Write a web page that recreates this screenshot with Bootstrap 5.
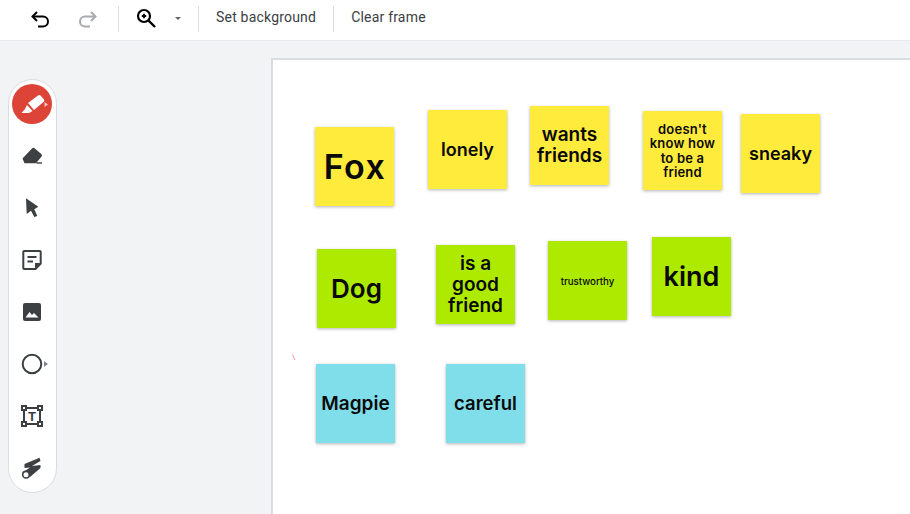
<!DOCTYPE html>
<html lang="en">
<head>
<meta charset="UTF-8">
<title>Jamboard frame</title>
<link rel="stylesheet" href="https://cdn.jsdelivr.net/npm/bootstrap@5.3.0/dist/css/bootstrap.min.css">
<style>
    body { width: 910px; height: 514px; overflow: hidden; background: #f1f3f4; font-family: Roboto, sans-serif; }
    .top-bar { height: 41px; padding-left: 16px; padding-bottom: 2px; background: #fff; border-bottom: 1px solid #e8eaed; }
    .tool-btn { width: 48px; height: 38px; }
    .tool-btn-sm { width: 14px; height: 38px; }
    .bar-sep { width: 1px; height: 26px; background: #dadce0; }
    .sep-a { margin-left: 6px; }
    .sep-b { margin-left: 13px; }
    .bar-text { font-size: 14px; letter-spacing: .2px; color: #3c4043; padding: 0 17px; line-height: 34px; height: 34px; }
    .work-area { height: 473px; }
    .palette-col { width: 271px; padding: 38px 0 0 8px; }
    .palette { width: 49px; height: 414px; background: #fff; border: 1px solid #dadce0; border-radius: 25px; padding-top: 4px; gap: 12px; }
    .pal-item { width: 100%; height: 40px; flex: none; padding-right: 1px; }
    .pal-active { width: 40px; height: 40px; border-radius: 50%; background: #db4437; }
    .shape-more { left: 35px; top: 17px; }
    .canvas-area { margin-top: 17px; border-top: 2px solid #dadce0; border-left: 2px solid #dadce0; background: #fff; position: relative; }
    .sticky { position: absolute; width: 79px; height: 79px; color: #0a0a0a; font-family: Inter, sans-serif; font-weight: 600; text-align: center; box-shadow: 0 1px 3px rgba(60,64,67,.4); }
    .s-yellow { background: #ffeb3b; }
    .s-green { background: #aeea00; }
    .s-blue { background: #80deea; }
    .pen-mark { position: absolute; left: 19px; top: 294px; }
</style>
</head>
<body>
<!-- Toolbar -->
<div class="top-bar d-flex align-items-center">
    <div class="tool-btn d-flex align-items-center justify-content-center">
        <svg width="24" height="24" viewBox="0 0 24 24" fill="none" stroke="#000" stroke-width="2"><path d="M9 14 4.500 9.500 9 5"/><path d="M5 9.500h10a5 5 0 0 1 0 10h-5"/></svg>
    </div>
    <div class="tool-btn d-flex align-items-center justify-content-center">
        <svg width="24" height="24" viewBox="0 0 24 24" fill="none" stroke="#a8aaad" stroke-width="2"><path d="M15 14l4.500-4.500L15 5"/><path d="M19 9.500H9a5 5 0 0 0 0 10h5"/></svg>
    </div>
    <div class="bar-sep sep-a"></div>
    <div class="tool-btn d-flex align-items-center justify-content-center ms-1">
        <svg width="24" height="24" viewBox="0 0 24 24" fill="none" stroke="#000" stroke-width="2.200"><circle cx="9" cy="9" r="6"/><path d="M13.500 13.500l6.500 6.500" stroke-width="2.400"/><path d="M6.800 9h4.400M9 6.800v4.400" stroke-width="1.800"/></svg>
    </div>
    <div class="tool-btn-sm d-flex align-items-center justify-content-center">
        <svg width="6" height="4" viewBox="0 0 6 4"><path d="M0 0h6L3 3z" fill="#5f6368"/></svg>
    </div>
    <div class="bar-sep sep-b"></div>
    <div class="bar-text mb-1">Set background</div>
    <div class="bar-sep"></div>
    <div class="bar-text mb-1">Clear frame</div>
</div>

<div class="work-area d-flex">
    <!-- Tool palette -->
    <div class="palette-col flex-shrink-0">
        <div class="palette d-flex flex-column align-items-center">
            <div class="pal-item d-flex align-items-center justify-content-center">
                <div class="pal-active d-flex align-items-center justify-content-center">
                    <svg width="40" height="40" viewBox="0 0 40 40"><path d="M16 19 26 11.500q1.500-1 3 .5l3 3.500q1 1.500-.5 2.500L22 26z" fill="#fff"/><path d="M15 21l5.500 6-3.500 2H9.500L13 25z" fill="#fff"/><path d="M32.500 18v5l3.500-2.500z" fill="#f6c6c0"/></svg>
                </div>
            </div>
            <div class="pal-item d-flex align-items-center justify-content-center">
                <svg width="24" height="24" viewBox="0 0 24 24" fill="#3c4043"><path d="M2.500 14.500 12 4.500q1.300-1.300 2.800 0l6.500 5.500q1.300 1.300.3 2.500L16 19.300H4.500z"/><rect x="16.500" y="18.300" width="5.500" height="1.400"/></svg>
            </div>
            <div class="pal-item d-flex align-items-center justify-content-center">
                <svg width="24" height="24" viewBox="0 0 24 24" fill="#3c4043"><path d="M6 2.300 18.300 10.700l-4 2.600 3 6.700-3 1-3.300-6.300-4.300 3.300z"/></svg>
            </div>
            <div class="pal-item d-flex align-items-center justify-content-center">
                <svg width="24" height="24" viewBox="0 0 24 24" fill="none" stroke="#3c4043" stroke-width="2"><path d="M4.300 3h15.400a1 1 0 0 1 1 1v11.500L15.500 21H4.300a1 1 0 0 1-1-1V4a1 1 0 0 1 1-1z"/><path d="M7.500 9h9M7.500 13.500h5.500"/><path d="M15 20.500V15h5.500z" fill="#3c4043" stroke="none"/></svg>
            </div>
            <div class="pal-item d-flex align-items-center justify-content-center">
                <svg width="24" height="24" viewBox="0 0 24 24"><rect x="3" y="3" width="18" height="18" rx="2" fill="#3c4043"/><path d="M5.500 17.500l4-5.500 2.500 3 2-2 4.500 4.500z" fill="#fff"/></svg>
            </div>
            <div class="pal-item d-flex align-items-center justify-content-center position-relative">
                <svg width="24" height="24" viewBox="0 0 24 24" fill="none"><circle cx="12" cy="12" r="9.300" stroke="#3c4043" stroke-width="2"/></svg>
                <svg class="position-absolute shape-more" width="5" height="6" viewBox="0 0 5 6"><path d="M0 0l4 3-4 3z" fill="#80868b"/></svg>
            </div>
            <div class="pal-item d-flex align-items-center justify-content-center">
                <svg width="24" height="24" viewBox="0 0 24 24"><rect x="4" y="4" width="16" height="16" fill="none" stroke="#3c4043" stroke-width="2"/><g fill="#fff" stroke="#3c4043" stroke-width="2"><rect x="2" y="2" width="4" height="4"/><rect x="18" y="2" width="4" height="4"/><rect x="2" y="18" width="4" height="4"/><rect x="18" y="18" width="4" height="4"/></g><text x="12" y="16.800" text-anchor="middle" font-family="Roboto, sans-serif" font-weight="700" font-size="13" fill="#3c4043">T</text></svg>
            </div>
            <div class="pal-item d-flex align-items-center justify-content-center">
                <svg width="24" height="24" viewBox="0 0 24 24"><path d="M4.500 8 19.500 1.800l1 3.200L12 10l8.500-1v3L10 21l-6-5.500 6-4-5.500.5z" fill="#3c4043"/><circle cx="6" cy="18.700" r="3.300" fill="#fff" stroke="#3c4043" stroke-width="1.600"/></svg>
            </div>
        </div>
    </div>

    <!-- Frame -->
    <div class="canvas-area flex-grow-1">
        <div class="sticky s-yellow d-flex align-items-center justify-content-center" style="left:42px;top:67px;font-size:34px;letter-spacing:1.500px;padding-left:1px;padding-bottom:1px">Fox</div>
        <div class="sticky s-yellow d-flex align-items-center justify-content-center" style="left:155px;top:50px;font-size:18px">lonely</div>
        <div class="sticky s-yellow d-flex align-items-center justify-content-center" style="left:257px;top:46px;font-size:19px;line-height:21px;padding-bottom:2px">wants<br>friends</div>
        <div class="sticky s-yellow d-flex align-items-center justify-content-center" style="left:370px;top:51px;font-size:13px;line-height:14.500px;letter-spacing:.2px">doesn't<br>know how<br>to be a<br>friend</div>
        <div class="sticky s-yellow d-flex align-items-center justify-content-center" style="left:468px;top:54px;font-size:18px">sneaky</div>
        <div class="sticky s-green d-flex align-items-center justify-content-center" style="left:44px;top:189px;font-size:26px">Dog</div>
        <div class="sticky s-green d-flex align-items-center justify-content-center" style="left:163px;top:185px;font-size:19px;line-height:21px">is a<br>good<br>friend</div>
        <div class="sticky s-green d-flex align-items-center justify-content-center" style="left:275px;top:181px;font-size:9.700px;font-weight:500;padding-top:3px">trustworthy</div>
        <div class="sticky s-green d-flex align-items-center justify-content-center" style="left:379px;top:177px;font-size:27px;padding-top:2px">kind</div>
        <div class="sticky s-blue d-flex align-items-center justify-content-center" style="left:43px;top:304px;font-size:19px;padding-top:2px">Magpie</div>
        <div class="sticky s-blue d-flex align-items-center justify-content-center" style="left:173px;top:304px;font-size:18.500px">careful</div>
        <svg class="pen-mark" width="4" height="7" viewBox="0 0 4 7"><path d="M.5.500 3 6" stroke="#f48fb1" stroke-width="1" fill="none"/></svg>
    </div>
</div>
<script src="https://cdn.jsdelivr.net/npm/bootstrap@5.3.0/dist/js/bootstrap.bundle.min.js"></script>
</body>
</html>
